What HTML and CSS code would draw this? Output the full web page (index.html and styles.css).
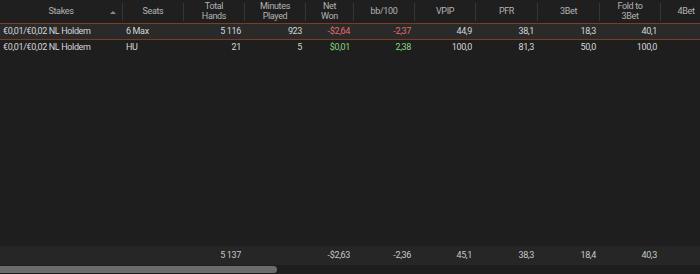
FILE: index.html
```html
<!DOCTYPE html>
<html>
<head>
<meta charset="utf-8">
<link rel="stylesheet" href="styles.css">
</head>
<body>
<div class="grid">
  <div class="row head">
    <div class="hc sorted">Stakes<span class="arrow"></span></div>
    <div class="hc">Seats</div>
    <div class="hc">Total<br>Hands</div>
    <div class="hc">Minutes<br>Played</div>
    <div class="hc">Net<br>Won</div>
    <div class="hc">bb/100</div>
    <div class="hc">VPIP</div>
    <div class="hc">PFR</div>
    <div class="hc">3Bet</div>
    <div class="hc">Fold to<br>3Bet</div>
    <div class="hc last">4Bet</div>
  </div>
  <div class="row data selected">
    <div class="c l">€0,01/€0,02 NL Holdem</div>
    <div class="c l">6 Max</div>
    <div class="c">5 116</div>
    <div class="c">923</div>
    <div class="c neg">-$2,64</div>
    <div class="c neg">-2,37</div>
    <div class="c">44,9</div>
    <div class="c">38,1</div>
    <div class="c">18,3</div>
    <div class="c">40,1</div>
    <div class="c"></div>
  </div>
  <div class="row data">
    <div class="c l">€0,01/€0,02 NL Holdem</div>
    <div class="c l">HU</div>
    <div class="c">21</div>
    <div class="c">5</div>
    <div class="c pos">$0,01</div>
    <div class="c pos">2,38</div>
    <div class="c">100,0</div>
    <div class="c">81,3</div>
    <div class="c">50,0</div>
    <div class="c">100,0</div>
    <div class="c"></div>
  </div>
  <div class="spacer"></div>
  <div class="row foot">
    <div class="c l"></div>
    <div class="c l"></div>
    <div class="c">5 137</div>
    <div class="c"></div>
    <div class="c">-$2,63</div>
    <div class="c">-2,36</div>
    <div class="c">45,1</div>
    <div class="c">38,3</div>
    <div class="c">18,4</div>
    <div class="c">40,3</div>
    <div class="c"></div>
  </div>
  <div class="hscroll"><div class="thumb"></div></div>
</div>
</body>
</html>
```

FILE: styles.css
```css
html, body {
  margin: 0;
  padding: 0;
  background: #1e1e1e;
  width: 700px;
  height: 274px;
  overflow: hidden;
}
.grid {
  display: flex;
  flex-direction: column;
  height: 274px;
  font-family: Roboto, "Noto Sans", sans-serif;
  font-size: 9px;
  letter-spacing: -0.35px;
  color: #d6d6d6;
}
.row {
  display: grid;
  grid-template-columns: 123px 61px 61px 61px 48px 61px 61px 62px 62px 61px 50px;
  width: 711px;
}
.head {
  height: 24px;
  align-items: center;
  background: #1f1f1f;
  border-bottom: 1px solid #7a3f1c;
  box-sizing: border-box;
}
.hc {
  height: 18px;
  display: flex;
  align-items: center;
  justify-content: center;
  text-align: center;
  line-height: 10px;
  color: #b4b4b4;
  border-right: 1px solid #353535;
  position: relative;
  padding-bottom: 1px;
  box-sizing: border-box;
}
.hc.last { border-right: none; }
.arrow {
  position: absolute;
  right: 6px;
  top: 8px;
  width: 0;
  height: 0;
  border-left: 3px solid transparent;
  border-right: 3px solid transparent;
  border-bottom: 3px solid #8a8a8a;
}
.data {
  height: 15px;
  align-items: center;
}
.data.selected {
  background: #2a2a2a;
  border-bottom: 1px solid #7a3f1c;
}
.c {
  text-align: right;
  padding: 0 4px;
  white-space: nowrap;
  line-height: 15px;
}
.c.l { text-align: left; padding-left: 3px; }
.neg { color: #e36a6a; }
.pos { color: #86d57e; }
.spacer { flex: 1; }
.foot {
  height: 19px;
  align-items: center;
  background: #262626;
  color: #c8c8c8;
}
.hscroll {
  height: 9px;
  background: #1e1e1e;
  display: flex;
  align-items: center;
}
.thumb {
  width: 277px;
  height: 7px;
  background: #6b6b6b;
  border-radius: 0 4px 4px 0;
}
```
